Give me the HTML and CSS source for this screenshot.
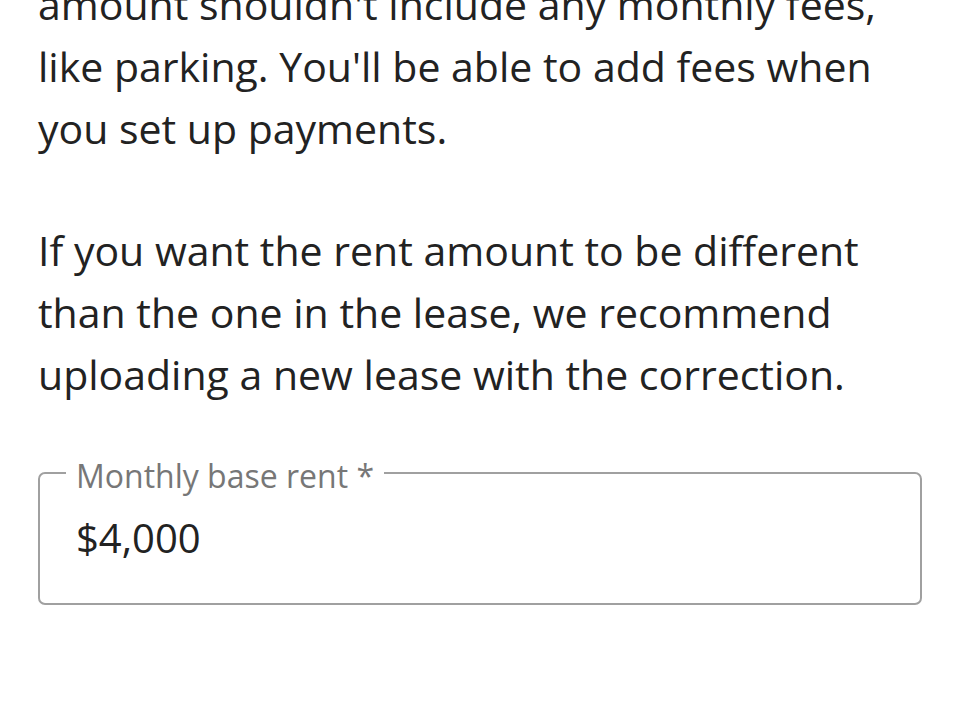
FILE: index.html
```html
<!DOCTYPE html>
<html lang="en">

<head>
    <meta charset="utf-8">
    <meta name="viewport" content="width=device-width, initial-scale=1.0">
    <title>Monthly base rent</title>
    <link rel="stylesheet" href="styles.css">
</head>

<body>
    <main class="rent">
        <p class="info info-first">amount shouldn't include any monthly fees, like parking. You'll be able to add fees when you set up payments.</p>
        <p class="info">If you want the rent amount to be different than the one in the lease, we recommend uploading a new lease with the correction.</p>

        <fieldset class="field">
            <legend>Monthly base rent *</legend>
            <div class="value">$4,000</div>
        </fieldset>
    </main>
</body>

</html>
```

FILE: styles.css
```css
body {
    margin: 0;
    background-color: #ffffff;
    font-family: "Open Sans", "Noto Sans", sans-serif;
    color: #222222;
}

.rent {
    padding: 0 38px;
}

.info {
    font-size: 41px;
    line-height: 62px;
    margin: 0;
}

.info + .info {
    margin-top: 60px;
}

.info-first {
    margin-top: -27px;
}

/* outlined input */
.field {
    margin: 48px 0 0;
    padding: 0 36px 37px;
    border: 2px solid #a0a0a0;
    border-radius: 7px;
}

.field legend {
    padding: 6px 10px 0;
    margin-left: -10px;
    font-size: 32px;
    line-height: 34px;
    color: #777777;
}

.value {
    font-size: 40px;
    line-height: 56px;
    padding-top: 17px;
}
```
